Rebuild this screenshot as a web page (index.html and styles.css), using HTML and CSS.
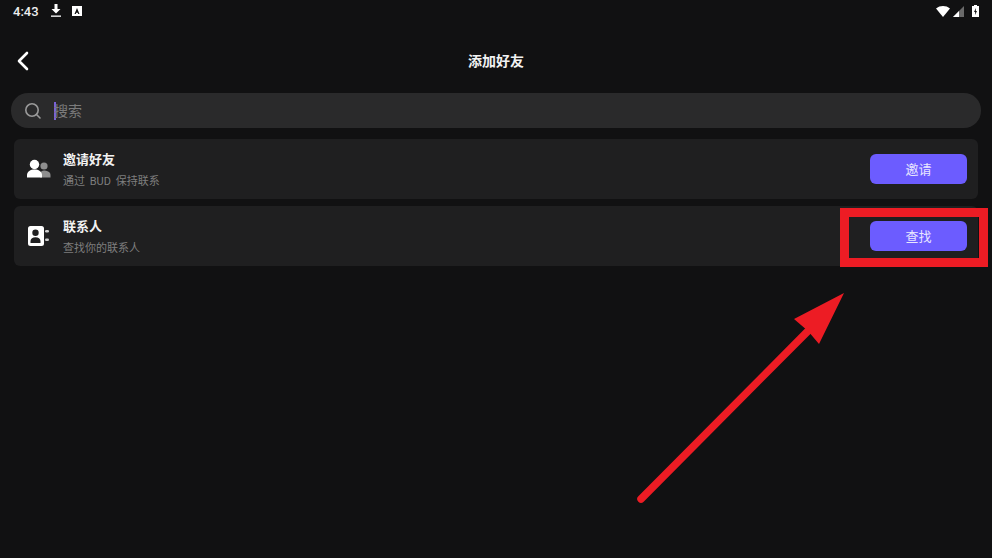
FILE: index.html
```html
<!DOCTYPE html>
<html lang="zh">

<head>
    <meta charset="UTF-8">
    <title>添加好友</title>
    <link rel="stylesheet" href="styles.css">
</head>

<body>
    <div class="status-bar">
        <span class="time">4:43</span>
        <svg class="st-download" width="12" height="14" viewBox="0 0 12 14">
            <path d="M4.5 0h3v5h3L6 9.5 1.500 5h3z" fill="#fff" />
            <rect x="1" y="11.500" width="10" height="1.300" fill="#fff" />
        </svg>
        <svg class="st-a" width="10" height="10" viewBox="0 0 10 10">
            <path fill-rule="evenodd" d="M0 0h10v10H0zM5 2 2.500 8h1.300l.5-1.300h1.400L6.200 8h1.300z" fill="#fff" />
        </svg>
        <span class="spacer"></span>
        <svg width="14" height="11" viewBox="0 0 14 11">
            <path d="M0 2.500C4-.8 10-.8 14 2.500L7 11z" fill="#fff" />
        </svg>
        <svg class="st-signal" width="11" height="11" viewBox="0 0 11 11">
            <path d="M11 0v11H0z" fill="#6a6a6a" />
            <path d="M6 5v6H0z" fill="#fff" />
        </svg>
        <svg class="st-battery" width="7" height="12" viewBox="0 0 7 12">
            <path fill-rule="evenodd" d="M2 0h3v1h2v11H0V1h2zM4 3 2 7h1.200L3 10l2-4H3.800z" fill="#fff" />
        </svg>
    </div>

    <div class="title-bar">
        <svg class="back" width="14" height="20" viewBox="0 0 14 20">
            <path d="M11 2 3 10l8 8" fill="none" stroke="#fff" stroke-width="2.600" stroke-linecap="round"
                stroke-linejoin="round" />
        </svg>
        <h1>添加好友</h1>
    </div>

    <div class="search">
        <svg width="18" height="18" viewBox="0 0 18 18">
            <circle cx="8" cy="8" r="6.200" fill="none" stroke="#9a9a9a" stroke-width="1.600" />
            <path d="M12.500 12.500 16 16" stroke="#9a9a9a" stroke-width="1.600" stroke-linecap="round" />
        </svg>
        <span class="caret"></span>
        <span class="placeholder">搜索</span>
    </div>

    <div class="list">
        <div class="item">
            <svg class="item-icon" width="24" height="20" viewBox="0 0 24 20">
                <circle cx="17" cy="7" r="3.600" fill="#8e8e8e" />
                <path d="M13 18.500v-3c0-2.500 2-4 4-4s6.500 1 6.500 4.500v2.500z" fill="#8e8e8e" />
                <circle cx="7.500" cy="5.500" r="4.700" fill="#fff" />
                <path d="M0 18.500v-2.500c0-3.500 3.500-5.500 7.500-5.500s7.500 2 7.500 5.500v2.500z" fill="#fff" />
            </svg>
            <div class="item-text">
                <div class="item-name">邀请好友</div>
                <div class="item-desc">通过 BUD 保持联系</div>
            </div>
            <button class="btn">邀请</button>
        </div>
        <div class="item">
            <svg class="item-icon" width="24" height="22" viewBox="0 0 24 22">
                <path fill-rule="evenodd"
                    d="M3.500 1h11A2.500 2.500 0 0 1 17 3.500v15a2.500 2.500 0 0 1-2.500 2.500h-11A2.500 2.500 0 0 1 1 18.500v-15A2.500 2.500 0 0 1 3.500 1zm5 3.500a3.200 3.200 0 1 0 0 6.400 3.200 3.200 0 0 0 0-6.400zM3.500 18h10v-2c0-2.200-2.200-3.800-5-3.800s-5 1.600-5 3.800z"
                    fill="#fff" />
                <rect x="18" y="5" width="4" height="2.400" rx="1.200" fill="#d0d0d0" />
                <rect x="18" y="13.500" width="4" height="2.400" rx="1.200" fill="#d0d0d0" />
            </svg>
            <div class="item-text">
                <div class="item-name">联系人</div>
                <div class="item-desc">查找你的联系人</div>
            </div>
            <button class="btn">查找</button>
        </div>
    </div>

    <!-- 标注：红框和箭头 -->
    <div class="mark-box"></div>
    <svg class="mark-arrow" width="992" height="558" viewBox="0 0 992 558">
        <path d="M641 499 808 331" stroke="#ed1c24" stroke-width="7.500" stroke-linecap="round" />
        <path d="M844 293 794 319 808 331 819 344z" fill="#ed1c24" />
    </svg>
</body>

</html>
```

FILE: styles.css
```css
* {
    box-sizing: border-box;
}

html,
body {
    margin: 0;
    height: 100%;
}

body {
    position: relative;
    overflow: hidden;
    background-color: #111112;
    color: #fff;
    font-family: "Roboto", "Noto Sans CJK SC", sans-serif;
}

.status-bar {
    display: flex;
    align-items: center;
    height: 22px;
    padding: 0 13px;
}

.time {
    width: 38px;
    font-size: 13px;
    font-weight: 500;
    color: #eee;
}

.st-download {
    margin-left: -1px;
}

.st-a {
    margin-left: 10px;
}

.spacer {
    flex: 1;
}

.st-signal {
    margin-left: 3px;
}

.st-battery {
    margin-left: 8px;
}

.title-bar {
    position: relative;
    display: flex;
    justify-content: center;
    align-items: center;
    height: 32px;
    margin-top: 22px;
}

.title-bar h1 {
    margin: 0;
    font-size: 14px;
    font-weight: 700;
    color: #f2f2f2;
}

.back {
    position: absolute;
    left: 16px;
    top: 7px;
}

.search {
    display: flex;
    align-items: center;
    height: 35px;
    margin: 17px 11px 0;
    padding-left: 13px;
    border-radius: 17px;
    background-color: #2a2a2b;
}

.caret {
    width: 2px;
    height: 18px;
    margin-left: 12px;
    background-color: #7a62d8;
}

.placeholder {
    margin-left: -2px;
    padding-bottom: 2px;
    font-size: 14px;
    color: #7b7b7b;
}

.list {
    display: flex;
    flex-direction: column;
    gap: 7px;
    margin: 11px 14px 0;
}

.item {
    display: flex;
    align-items: center;
    height: 60px;
    padding: 0 11px 0 13px;
    border-radius: 6px;
    background-color: #1f1f20;
}

.item-icon {
    flex: none;
}

.item-text {
    flex: 1;
    margin-left: 12px;
    padding-top: 2px;
}

.item-name {
    font-size: 13px;
    line-height: 19px;
    font-weight: 700;
    color: #f2f2f2;
}

.item-desc {
    margin-top: 5px;
    font-size: 11px;
    line-height: 16px;
    word-spacing: 2px;
    color: #7e7e7e;
}

.btn {
    width: 97px;
    height: 30px;
    padding: 0 0 2px;
    border: 0;
    border-radius: 6px;
    background-color: #6c5cff;
    color: #e8e6ff;
    font-family: inherit;
    font-size: 13px;
}

.mark-box {
    position: absolute;
    left: 840px;
    top: 208px;
    width: 148px;
    height: 59px;
    border: 9px solid #ed1c24;
}

.mark-arrow {
    position: absolute;
    left: 0;
    top: 0;
}
```
